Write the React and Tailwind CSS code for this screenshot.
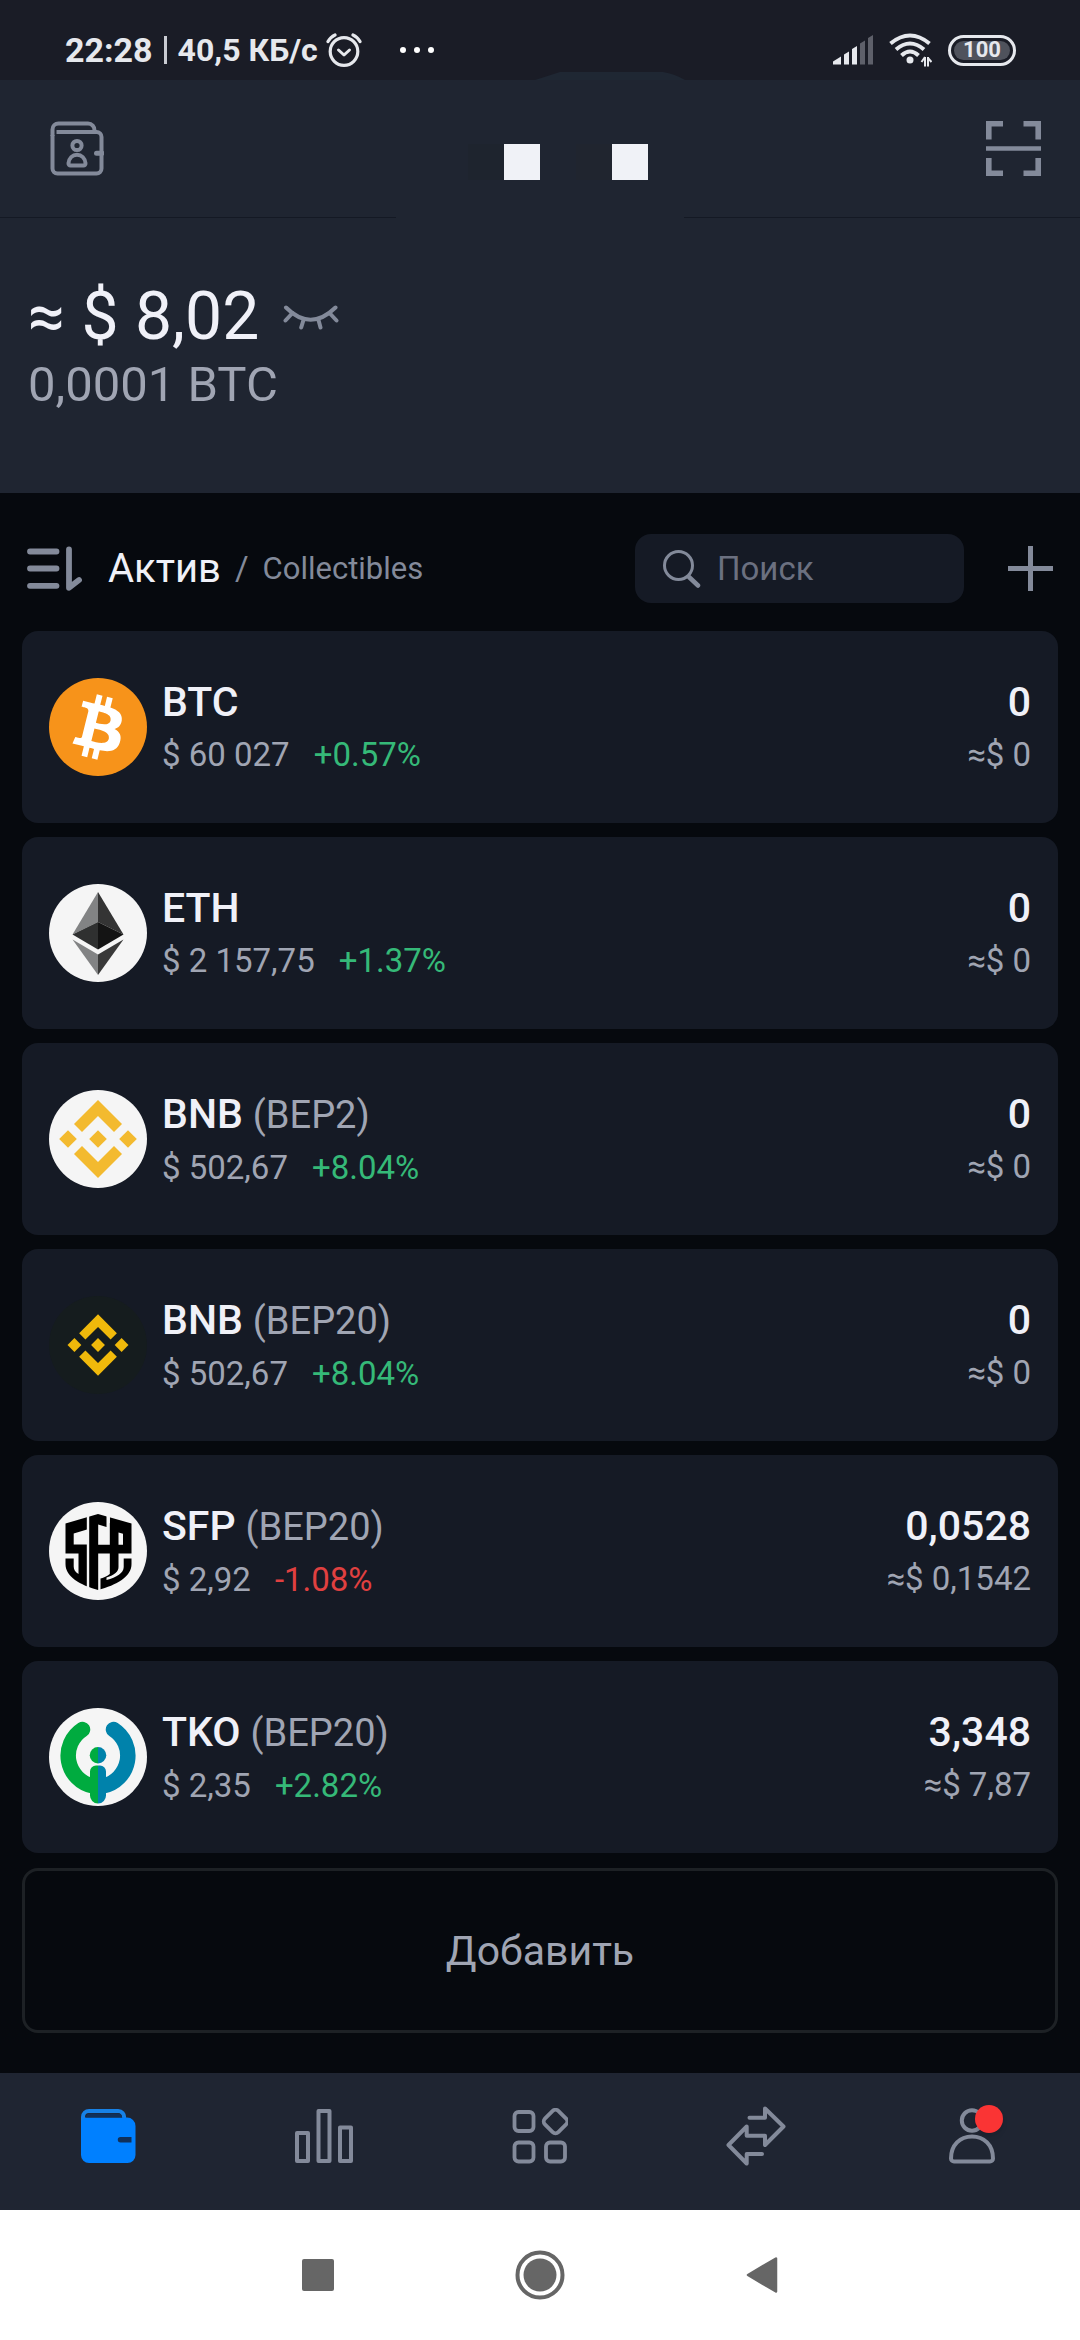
import React, { useState } from 'react';
import clsx from 'clsx';

function BtcLogo() {
  return (
    <svg viewBox="0 0 98 98" className="size-[98px] shrink-0" aria-hidden="true">
      <circle cx="49" cy="49" r="49" fill="#f7931a" />
      <path
        transform="translate(-3.3 -3.4) scale(3.28)"
        fill="#fff"
        d="M23.189 14.02c.314-2.096-1.283-3.223-3.465-3.975l.708-2.84-1.728-.43-.69 2.765c-.454-.114-.92-.22-1.385-.326l.695-2.783L15.596 6l-.708 2.839c-.376-.086-.746-.17-1.104-.26l.002-.009-2.384-.595-.46 1.846s1.283.294 1.256.312c.7.175.826.638.805 1.006l-.806 3.235c.048.012.11.03.18.057l-.183-.045-1.13 4.532c-.086.212-.303.531-.793.41.018.025-1.256-.313-1.256-.313l-.858 1.978 2.25.561c.418.105.828.215 1.231.318l-.715 2.872 1.727.43.708-2.84c.472.127.93.245 1.378.357l-.706 2.828 1.728.43.715-2.866c2.948.558 5.164.333 6.097-2.333.752-2.146-.037-3.385-1.588-4.192 1.13-.26 1.98-1.003 2.207-2.538zm-3.95 5.538c-.533 2.147-4.148.986-5.32.695l.95-3.805c1.172.293 4.929.872 4.37 3.11zm.535-5.569c-.487 1.953-3.495.96-4.47.717l.86-3.45c.975.243 4.118.696 3.61 2.733z"
      />
    </svg>
  );
}

function EthLogo() {
  return (
    <svg viewBox="0 0 98 98" className="size-[98px] shrink-0" aria-hidden="true">
      <circle cx="49" cy="49" r="49" fill="#f5f5f5" />
      <path fill="#828384" d="M49 8v30L23.500 50.500z" />
      <path fill="#343434" d="M49 8v30l25.500 12.500z" />
      <path fill="#2f3030" d="M49 38v27.500l-25.500-15z" />
      <path fill="#141414" d="M49 38v27.500l25.500-15z" />
      <path fill="#828384" d="M23.500 55.500L49 70.500V91z" />
      <path fill="#393939" d="M74.500 55.500L49 70.500V91z" />
    </svg>
  );
}

function BnbLogo({ dark }) {
  return (
    <svg viewBox="0 0 98 98" className="size-[98px] shrink-0" aria-hidden="true">
      <circle cx="49" cy="49" r="49" fill={dark ? '#151c1e' : '#f5f5f5'} />
      <g
        fill={dark ? '#f0b90b' : '#f3ba2f'}
        transform={dark ? 'translate(10.500 10.500) scale(.786)' : undefined}
      >
        <path d="M49 10l24 24-8 8-16-16-16 16-8-8z" />
        <path d="M49 88l24-24-8-8-16 16-16-16-8 8z" />
        <path d="M49 40.200l8.800 8.800-8.800 8.800-8.800-8.800z" />
        <path d="M19 40.200l8.800 8.800-8.800 8.800-8.800-8.800z" />
        <path d="M79 40.200l8.800 8.800-8.800 8.800-8.800-8.800z" />
      </g>
    </svg>
  );
}

function SfpLogo() {
  return (
    <svg viewBox="0 0 98 98" className="size-[98px] shrink-0" aria-hidden="true">
      <circle cx="49" cy="49" r="49" fill="#f5f5f5" />
      {/* shield */}
      <path fill="#000" d="M49 12l33.500 9.500V62c0 13-15 21-33.500 26C31 83 16.500 75 16.500 62V21.500z" />
      {/* gaps cut into the shield */}
      <g fill="#f5f5f5">
        <path d="M37.800 13h2.400v74h-2.400z" />
        <path d="M24.700 31.500L38 27.500v15H24.700z" />
        <path d="M16 51.500h13.500V72c-3.200-2-4.800-4.500-4.800-7.500v-8H16z" />
        <path d="M57.500 13h3.300v12h-3.300z" />
        <path d="M49.200 22.500l8.300 2.500h3.300v17.700H49.200z" />
        <path d="M49.200 51.500h11.600V72c-3 2.500-7 4-9.300 4.600V89h-2.300z" />
        <path d="M69.500 30.500l4.500 1.300v10.900h-4.500z" />
        <path d="M69.500 51.500H83v5h-8.300V65c0 6-7 10.500-17.200 13v-2.500c8-2.500 12-6 12-10.500z" />
        <path d="M58 13h2.800v8H58z" />
      </g>
    </svg>
  );
}

function TkoLogo() {
  return (
    <svg viewBox="0 0 98 98" className="size-[98px] shrink-0" aria-hidden="true">
      <circle cx="49" cy="49" r="49" fill="#f5f5f5" />
      <g fill="none" strokeWidth="15.500" strokeLinecap="round">
        <path stroke="#00ab3f" d="M33.500 21.500A31 31 0 0 0 44 78" />
        <path stroke="#0082ab" d="M64.500 21.500A31 31 0 0 1 54 78" />
      </g>
      <path fill="#00ab3f" d="M49 57.500h-2a6 6 0 0 0-6 6V87a8 8 0 0 0 8 8.500z" />
      <path fill="#0082ab" d="M49 57.500h2a6 6 0 0 1 6 6V87a8 8 0 0 1-8 8.500z" />
      <path fill="#00ab3f" d="M49 39a8 8 0 0 0 0 16.500z" />
      <path fill="#0082ab" d="M49 39a8 8 0 0 1 0 16.500z" />
    </svg>
  );
}

function AlarmIcon() {
  return (
    <svg viewBox="0 0 36 36" className="size-9" fill="none" stroke="#e6e8ed" strokeLinecap="round" aria-hidden="true">
      <circle cx="18" cy="19.500" r="13.800" strokeWidth="3.200" />
      <path d="M2 9.500Q4.500 5 9 3M34 9.500Q31.500 5 27 3" strokeWidth="3.200" />
      <path d="M12.500 18l5.500 5 5.500-5" strokeWidth="3" strokeLinejoin="round" />
    </svg>
  );
}

function SignalIcon() {
  return (
    <svg viewBox="0 0 40 30" className="h-[30px] w-10" aria-hidden="true">
      <path fill="#e6e8ed" d="M0 26.500L8 21.500v8H0zM11 19.500l5-3v13h-5zM19 14l5-3v18.500h-5z" />
      <path fill="#5e606a" d="M27 8.500l5-3v24h-5zM35 3l5-3v29.500h-5z" />
    </svg>
  );
}

function WifiIcon() {
  return (
    <svg viewBox="0 0 43 34" className="h-[34px] w-[43px]" fill="none" stroke="#e6e8ed" aria-hidden="true">
      <path d="M1.500 10.500Q21 -5.500 40.500 10.500" strokeWidth="4" />
      <path d="M7 16.500Q21 4.500 35 16.500" strokeWidth="4" />
      <path d="M12.500 22.500Q21 14.500 29.500 22.500" strokeWidth="4" />
      <circle cx="21" cy="27" r="3.500" fill="#e6e8ed" stroke="none" />
      <path d="M36 33.500v-9.500M36 24l-3.500 5M39 24v9.500M39 33" strokeWidth="2" />
      <path d="M39 25l3.500 4" strokeWidth="2" />
    </svg>
  );
}

function ContactsIcon() {
  return (
    <svg viewBox="0 0 54 55" className="h-[55px] w-[54px]" fill="none" stroke="#838a9a" strokeWidth="4" aria-hidden="true">
      <path d="M2.500 15V8.500A6 6 0 0 1 8.500 2.500H38a6.500 6.500 0 0 1 6.500 7" />
      <path d="M2.500 14V47.500a5 5 0 0 0 5 5H46.500a5 5 0 0 0 5-5V16a5 5 0 0 0-5-5H6.500" />
      <circle cx="27" cy="24.500" r="4.600" />
      <path d="M20.500 44.500a2 2 0 0 1-2-2.200c.5-5 4-8.500 8.500-8.500s8 3.500 8.500 8.500a2 2 0 0 1-2 2.200z" strokeLinejoin="round" />
      <path d="M46.500 32.300H52" strokeWidth="5" strokeLinecap="round" />
    </svg>
  );
}

function ScanIcon() {
  return (
    <svg viewBox="0 0 55 55" className="size-[55px]" fill="none" stroke="#838a9a" strokeWidth="5.600" aria-hidden="true">
      <path d="M17 2.800H2.800V18.500M37.500 2.800H52.200V18.500M17 52.200H2.800V37M37.500 52.200H52.200V37" />
      <path d="M0 27.500h55" strokeWidth="4.600" />
    </svg>
  );
}

function EyeClosedIcon() {
  return (
    <svg viewBox="0 0 56 25" className="h-[25px] w-14" fill="none" stroke="#838a9a" strokeWidth="4" strokeLinecap="round" aria-hidden="true">
      <path d="M3 2.500Q27.500 27 52.500 2.500" />
      <path d="M9.500 8L2.500 15.500M20.500 15l-2.300 7.500M35.500 15l2 7.500M46.500 8l7 7.500" />
    </svg>
  );
}

function SortIcon() {
  return (
    <svg viewBox="0 0 55 45" className="h-[45px] w-[55px]" fill="none" stroke="#838a9a" strokeWidth="5.800" strokeLinecap="round" strokeLinejoin="round" aria-hidden="true">
      <path d="M3 5.500h26.500M3 22.500h26.500M3 39.800h26.500" />
      <path d="M42 3.500V41.800L52 34" />
    </svg>
  );
}

function SearchIcon() {
  return (
    <svg viewBox="0 0 38 38" className="size-[38px] shrink-0" fill="none" stroke="#838a9a" aria-hidden="true">
      <circle cx="15.500" cy="15.500" r="14" strokeWidth="3" />
      <path d="M26 27l9 8.500" strokeWidth="4.500" strokeLinecap="round" />
    </svg>
  );
}

function PlusIcon() {
  return (
    <svg viewBox="0 0 45 45" className="size-[45px]" stroke="#838a9a" strokeWidth="5" aria-hidden="true">
      <path d="M22.500 0v45M0 22.500h45" />
    </svg>
  );
}

function WalletTabIcon() {
  return (
    <svg viewBox="0 0 55 54" className="h-[54px] w-[55px]" aria-hidden="true">
      <path d="M2 14V8a6 6 0 0 1 6-6H37a6 6 0 0 1 6 7" fill="none" stroke="#1781e6" strokeWidth="4" />
      <path d="M0 12l4-3.500H46a8.500 8.500 0 0 1 8.500 8.500V46a8 8 0 0 1-8 8H8a8 8 0 0 1-8-8z" fill="#0080ff" />
      <path d="M5 8.500a4 4 0 0 1 3.500-4H37.500a4 4 0 0 1 3.500 4z" fill="#10305a" />
      <path d="M39.500 28H50.500v5.500H39.500a2.750 2.750 0 0 1 0-5.500z" fill="#10305a" />
    </svg>
  );
}

function MarketTabIcon() {
  return (
    <svg viewBox="0 0 58 54" className="h-[54px] w-[58px]" fill="none" stroke="#838a9a" strokeWidth="4" strokeLinejoin="round" aria-hidden="true">
      <path d="M2 24h11v28H2zM23.500 2h11v50h-11zM45 18.500h11V52H45z" />
    </svg>
  );
}

function DappTabIcon() {
  return (
    <svg viewBox="0 0 56 56" className="size-14" fill="none" stroke="#838a9a" strokeWidth="3.800" aria-hidden="true">
      <rect x="2.500" y="4" width="19" height="19" rx="4" />
      <rect x="2.500" y="34.500" width="19" height="19" rx="4" />
      <rect x="34" y="34.500" width="19" height="19" rx="4" />
      <rect x="34" y="4" width="19" height="19" rx="4" transform="rotate(45 43.500 13.500)" />
    </svg>
  );
}

function SwapTabIcon() {
  return (
    <svg viewBox="0 0 60 60" className="size-[60px]" fill="none" stroke="#838a9a" strokeWidth="4" strokeLinecap="round" strokeLinejoin="round" aria-hidden="true">
      <path d="M23.500 11.700H39V2.500L57.500 20.500 39 39V29.800H20.700V20.500L2.500 39l18.200 18.500V48H36" />
    </svg>
  );
}

function ProfileTabIcon() {
  return (
    <svg viewBox="0 0 46 56" className="h-14 w-[46px]" fill="none" stroke="#838a9a" strokeWidth="4" aria-hidden="true">
      <circle cx="23" cy="12.500" r="10.200" />
      <path d="M5 53.500H41a3 3 0 0 0 3-3C44 37 35 28.500 23 28.500S2 37 2 50.500a3 3 0 0 0 3 3z" />
    </svg>
  );
}

const assets = [
  { id: 'btc', logo: <BtcLogo />, symbol: 'BTC', price: '$ 60 027', change: '+0.57%', amount: '0', value: '≈$ 0' },
  { id: 'eth', logo: <EthLogo />, symbol: 'ETH', price: '$ 2 157,75', change: '+1.37%', amount: '0', value: '≈$ 0' },
  { id: 'bnb2', logo: <BnbLogo />, symbol: 'BNB', chain: '(BEP2)', price: '$ 502,67', change: '+8.04%', amount: '0', value: '≈$ 0' },
  { id: 'bnb20', logo: <BnbLogo dark />, symbol: 'BNB', chain: '(BEP20)', price: '$ 502,67', change: '+8.04%', amount: '0', value: '≈$ 0' },
  { id: 'sfp', logo: <SfpLogo />, symbol: 'SFP', chain: '(BEP20)', price: '$ 2,92', change: '-1.08%', amount: '0,0528', value: '≈$ 0,1542' },
  { id: 'tko', logo: <TkoLogo />, symbol: 'TKO', chain: '(BEP20)', price: '$ 2,35', change: '+2.82%', amount: '3,348', value: '≈$ 7,87' },
];

const tabs = [
  { id: 'wallet', label: 'Кошелёк', icon: <WalletTabIcon /> },
  { id: 'market', label: 'Рынок', icon: <MarketTabIcon /> },
  { id: 'dapp', label: 'DApp', icon: <DappTabIcon /> },
  { id: 'swap', label: 'Обмен', icon: <SwapTabIcon /> },
  { id: 'profile', label: 'Профиль', icon: <ProfileTabIcon />, badge: true },
];

function StatusBar() {
  return (
    <div className="flex h-20 items-center bg-[#1a1c26] pt-5 pr-16 pl-[65px] font-bold text-[#e6e8ed]">
      <span className="text-[34px]">22:28</span>
      <span className="ml-[11px] h-7 w-[3px] bg-[#c9cbd2]" />
      <span className="ml-[11px] text-[32px]">40,5 КБ/с</span>
      <span className="ml-2">
        <AlarmIcon />
      </span>
      <span className="ml-[38px] flex gap-2">
        <i className="size-[6px] rounded-full bg-white" />
        <i className="size-[6px] rounded-full bg-white" />
        <i className="size-[6px] rounded-full bg-white" />
      </span>
      <div className="ml-auto flex items-center gap-4">
        <SignalIcon />
        <WifiIcon />
        <div className="flex h-[31px] w-[68px] rounded-full border-[3px] border-[#e6e8ed] p-[3px]">
          <span className="flex flex-1 items-center justify-center rounded-full bg-[#4f525c] text-[22px] leading-none">
            100
          </span>
        </div>
      </div>
    </div>
  );
}

function Header() {
  return (
    <header className="relative bg-[#1f2531]">
      <svg viewBox="0 0 290 8" className="absolute -top-2 left-1/2 h-2 w-[290px] -translate-x-1/2" aria-hidden="true">
        <path d="M140 8L165 0H268Q280 2 290 8z" fill="#1f2733" />
      </svg>
      <div className="grid h-[137px] grid-cols-[1fr_auto_1fr] items-start pt-[41px] pr-[39px] pl-[50px]">
        <button className="justify-self-start" aria-label="Контакты">
          <ContactsIcon />
        </button>
        <div className="mt-[23px] mr-[11px] grid grid-cols-6">
          <i className="size-9" />
          <i className="size-9 bg-[#1e242e]" />
          <i className="size-9 bg-[#f0f2f7]" />
          <i className="size-9" />
          <i className="size-9 bg-[#20252f]" />
          <i className="size-9 bg-[#f0f2f7]" />
        </div>
        <button className="justify-self-end" aria-label="Сканировать">
          <ScanIcon />
        </button>
      </div>
      <div className="flex h-px justify-between">
        <i className="w-[396px] bg-[#141924]" />
        <i className="w-[396px] bg-[#141924]" />
      </div>
      <div className="px-7 pt-[60px] pb-[79px]">
        <div className="flex items-center gap-6">
          <span className="text-[66px] leading-[78px] text-[#f0f1f8]">≈ $ 8,02</span>
          <button aria-label="Скрыть баланс">
            <EyeClosedIcon />
          </button>
        </div>
        <p className="text-[49px] leading-[58px] text-[#a0a5b3]">0,0001 BTC</p>
      </div>
    </header>
  );
}

function AssetCard({ asset }) {
  return (
    <li className="flex h-48 items-center rounded-2xl bg-[#151a25] px-[27px]">
      {asset.logo}
      <div className="ml-[15px] flex flex-col gap-2">
        <div className="flex items-baseline gap-[10px] leading-[48px]">
          <span className="text-[41px] font-medium text-[#f0f1f8]">{asset.symbol}</span>
          {asset.chain && <span className="text-[38px] text-[#a0a5b3]">{asset.chain}</span>}
        </div>
        <div className="flex gap-6 text-[33px] leading-[42px]">
          <span className="text-[#a0a5b3]">{asset.price}</span>
          <span className={clsx(asset.change.startsWith('-') ? 'text-[#e04040]' : 'text-[#35b978]')}>
            {asset.change}
          </span>
        </div>
      </div>
      <div className="ml-auto flex flex-col gap-2 text-right">
        <span className="text-[41px] leading-[48px] font-medium text-[#f0f1f8]">{asset.amount}</span>
        <span className="text-[33px] leading-[42px] text-[#a0a5b3]">{asset.value}</span>
      </div>
    </li>
  );
}

export default function App() {
  const [query, setQuery] = useState('');
  const visible = assets.filter((a) => a.symbol.toLowerCase().includes(query.toLowerCase()));

  return (
    <div className="flex min-h-screen flex-col bg-[#06090e] font-['Roboto',sans-serif]">
      <StatusBar />
      <Header />

      <main className="flex-1 px-[22px] pb-10">
        <div className="flex items-center px-[5px] pt-[41px] pb-7">
          <button aria-label="Сортировка">
            <SortIcon />
          </button>
          <button className="ml-[26px] text-[40px] leading-[48px] text-[#f0f1f8]">Актив</button>
          <span className="mx-[14px] text-[33px] leading-10 text-[#838a9a]">/</span>
          <button className="text-[31px] leading-10 text-[#838a9a]">Collectibles</button>
          <label className="ml-auto flex h-[69px] w-[329px] items-center gap-4 rounded-2xl bg-[#151a25] pr-5 pl-7">
            <SearchIcon />
            <input
              type="text"
              value={query}
              onChange={(e) => setQuery(e.target.value)}
              placeholder="Поиск"
              aria-label="Поиск"
              className="w-full min-w-0 bg-transparent text-[33px] leading-10 text-[#f0f1f8] outline-none placeholder:text-[#6b7080]"
            />
          </label>
          <button className="ml-11" aria-label="Добавить актив">
            <PlusIcon />
          </button>
        </div>

        <ul className="flex flex-col gap-[14px]">
          {visible.map((asset) => (
            <AssetCard key={asset.id} asset={asset} />
          ))}
        </ul>

        <button className="mt-[15px] h-[165px] w-full rounded-2xl border-[3px] border-[#1d2125] text-[41px] leading-[48px] text-[#a0a5b3]">
          Добавить
        </button>
      </main>

      <nav className="grid h-[137px] grid-cols-5 bg-[#1f2532] pb-3">
        {tabs.map((tab) => (
          <button key={tab.id} className="flex items-center justify-center" aria-label={tab.label}>
            <span className="relative">
              {tab.icon}
              {tab.badge && <i className="absolute -top-[3px] -right-2 size-7 rounded-full bg-[#fa3434] shadow-md" />}
            </span>
          </button>
        ))}
      </nav>

      {/* android navigation */}
      <div className="flex h-[130px] items-center justify-center bg-white">
        <button className="flex w-[222px] justify-center" aria-label="Недавние">
          <svg viewBox="0 0 32 32" className="size-8" aria-hidden="true">
            <rect width="32" height="32" rx="2" fill="#666" />
          </svg>
        </button>
        <button className="flex w-[222px] justify-center" aria-label="Домой">
          <svg viewBox="0 0 50 50" className="size-[50px]" aria-hidden="true">
            <circle cx="25" cy="25" r="22.500" fill="none" stroke="#666" strokeWidth="4" />
            <circle cx="25" cy="25" r="16.500" fill="#666" />
          </svg>
        </button>
        <button className="flex w-[222px] justify-center" aria-label="Назад">
          <svg viewBox="0 0 32 36" className="h-9 w-8" aria-hidden="true">
            <path d="M2 18L30 1.500V34.500z" fill="#666" stroke="#666" strokeWidth="2.500" strokeLinejoin="round" />
          </svg>
        </button>
      </div>
    </div>
  );
}
